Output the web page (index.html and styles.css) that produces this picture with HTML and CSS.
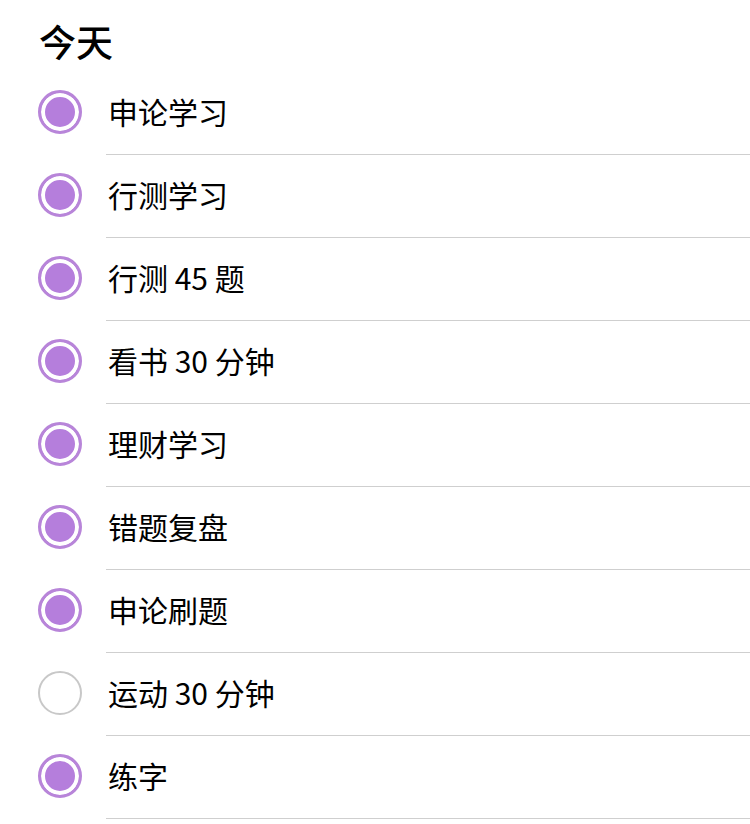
FILE: index.html
```html
<!DOCTYPE html>
<html lang="zh">
<head>
  <meta charset="UTF-8">
  <meta name="viewport" content="width=device-width, initial-scale=1.0">
  <link rel="stylesheet" href="styles.css">
  <title>今天</title>
</head>
<body>
  <div class="titel">今天</div>
  <div class="list">
    <div class="row"><span class="dot done"></span><div class="label">申论学习</div></div>
    <div class="row"><span class="dot done"></span><div class="label">行测学习</div></div>
    <div class="row"><span class="dot done"></span><div class="label">行测 45 题</div></div>
    <div class="row"><span class="dot done"></span><div class="label">看书 30 分钟</div></div>
    <div class="row"><span class="dot done"></span><div class="label">理财学习</div></div>
    <div class="row"><span class="dot done"></span><div class="label">错题复盘</div></div>
    <div class="row"><span class="dot done"></span><div class="label">申论刷题</div></div>
    <div class="row"><span class="dot"></span><div class="label">运动 30 分钟</div></div>
    <div class="row"><span class="dot done"></span><div class="label">练字</div></div>
  </div>
</body>
</html>
```

FILE: styles.css
```css
body {
  margin: 0;
  background: #fff;
  color: #000;
  font-family: "Noto Sans CJK SC", "Noto Sans", sans-serif;
}

.titel {
  font-size: 37px;
  line-height: 40px;
  font-weight: 500;
  padding: 21px 0 0 39px;
  height: 51px;
}

.row {
  display: flex;
  align-items: stretch;
  height: 83px;
}

.dot {
  flex: none;
  align-self: center;
  width: 44px;
  height: 44px;
  box-sizing: border-box;
  margin: 0 24px 4px 38px;
  border-radius: 50%;
  border: 2px solid #c8c8c8;
}

.dot.done {
  border: 3px solid #b885d9;
  background: #b57edc;
  box-shadow: inset 0 0 0 4px #fff;
}

.label {
  flex: 1;
  display: flex;
  align-items: center;
  padding: 0 0 4px 2px;
  font-size: 30px;
  border-bottom: 1px solid #cfcfcf;
}
```
